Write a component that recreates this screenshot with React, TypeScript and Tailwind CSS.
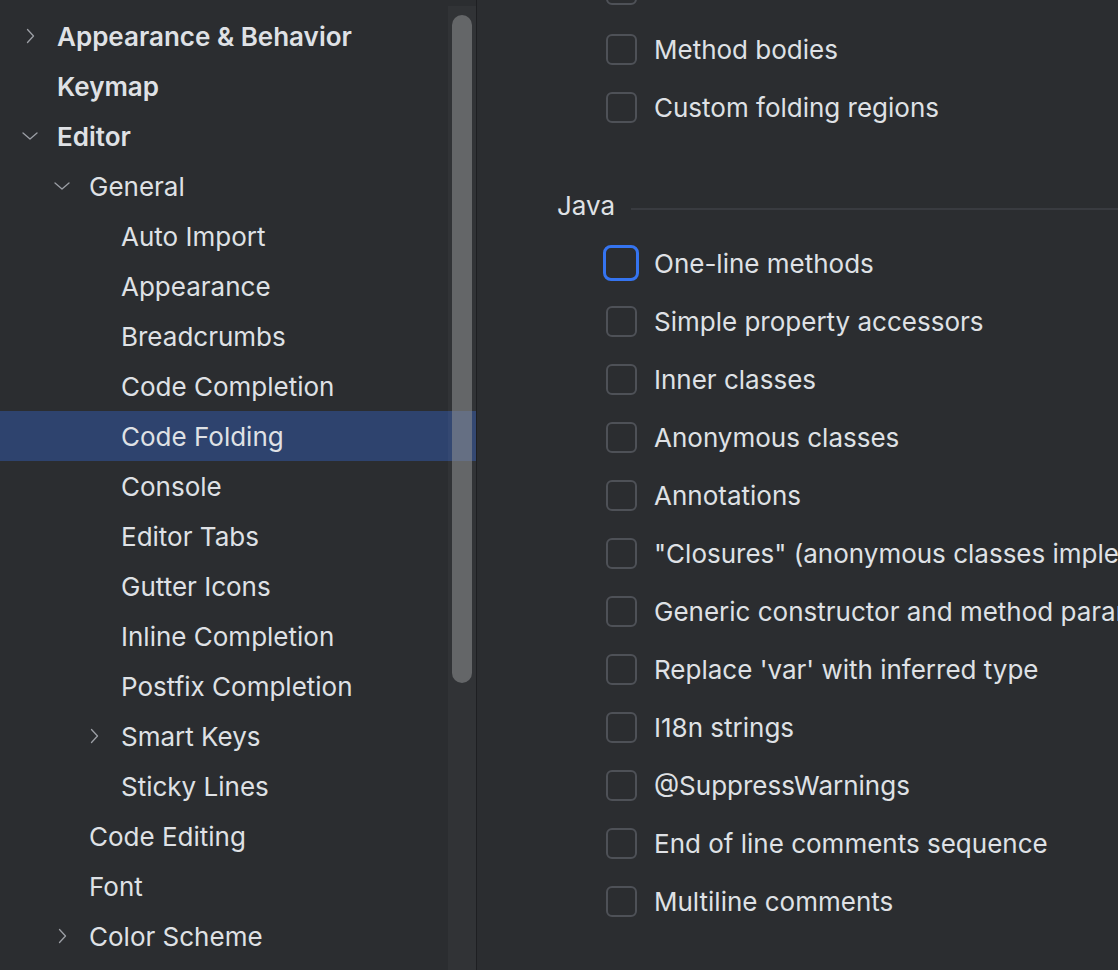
import type { ReactNode } from 'react'

type TreeItem = {
  label: string
  level: number
  arrow?: 'right' | 'down'
  bold?: boolean
  selected?: boolean
}

const tree: TreeItem[] = [
  { label: 'Appearance & Behavior', level: 0, arrow: 'right', bold: true },
  { label: 'Keymap', level: 0, bold: true },
  { label: 'Editor', level: 0, arrow: 'down', bold: true },
  { label: 'General', level: 1, arrow: 'down' },
  { label: 'Auto Import', level: 2 },
  { label: 'Appearance', level: 2 },
  { label: 'Breadcrumbs', level: 2 },
  { label: 'Code Completion', level: 2 },
  { label: 'Code Folding', level: 2, selected: true },
  { label: 'Console', level: 2 },
  { label: 'Editor Tabs', level: 2 },
  { label: 'Gutter Icons', level: 2 },
  { label: 'Inline Completion', level: 2 },
  { label: 'Postfix Completion', level: 2 },
  { label: 'Smart Keys', level: 2, arrow: 'right' },
  { label: 'Sticky Lines', level: 2 },
  { label: 'Code Editing', level: 1 },
  { label: 'Font', level: 1 },
  { label: 'Color Scheme', level: 1, arrow: 'right' },
]

const topOptions = ['Method bodies', 'Custom folding regions']

const javaOptions = [
  'One-line methods',
  'Simple property accessors',
  'Inner classes',
  'Anonymous classes',
  'Annotations',
  '"Closures" (anonymous classes implementing one method)',
  'Generic constructor and method parameters',
  "Replace 'var' with inferred type",
  'I18n strings',
  '@SuppressWarnings',
  'End of line comments sequence',
  'Multiline comments',
]

const indent = ['pl-[16px]', 'pl-[48px]', 'pl-[80px]']

function Chevron({ dir }: { dir: 'right' | 'down' }) {
  return <svg width="16" height="16" viewBox="0 0 16 16" fill="none" stroke="#9c9fa5" strokeWidth="1.3" strokeLinecap="round" strokeLinejoin="round">
    {dir === 'right' ? <path d="M5.5 1.5 L11.5 8 L5.5 14.5" /> : <path d="M1 5 L8 11 L15 5" />}
  </svg>
}

function Checkbox({ focused }: { focused?: boolean }) {
  if (focused) return <div className="w-[36px] h-[36px] -ml-[3px] mr-[15px] rounded-[8px] border-[3px] border-[#3574f0] shrink-0" />
  return <div className="w-[31px] h-[31px] mr-[17px] rounded-[6px] border-2 border-[#4e5157] shrink-0" />
}

function OptionRow({ children, focused }: { children?: ReactNode, focused?: boolean }) {
  return <div className="h-[58px] flex items-center pl-[129px] whitespace-nowrap">
    <Checkbox focused={focused} />
    <span>{children}</span>
  </div>
}

export default function App() {
  return <div className="flex h-[970px] w-[1118px] overflow-hidden bg-[#2b2d30] text-[#dfe1e5] text-[26px] font-['Inter',sans-serif]">
    <aside className="relative w-[477px] shrink-0 border-r border-[#1e1f22]">
      <div className="pt-[11px]">
        {tree.map(item => <div key={item.label} className={`h-[50px] flex items-center ${indent[item.level]} ${item.selected ? 'bg-[#2e436e]' : ''}`}>
          <div className="w-[41px] shrink-0 flex">
            {item.arrow && <div className="ml-[6px]"><Chevron dir={item.arrow} /></div>}
          </div>
          <span className={item.bold ? 'font-semibold' : ''}>{item.label}</span>
        </div>)}
      </div>

      {/* scrollbar */}
      <div className="absolute right-0 top-[6px] bottom-0 w-[28px] bg-[#ffffff]/[0.03]">
        <div className="absolute left-[4px] top-[9px] h-[668px] w-[20px] rounded-full bg-[#8e8f92]/55" />
      </div>
    </aside>

    <main className="flex-1 min-w-0">
      {/* row scrolled almost out of view: only its checkbox edge shows */}
      <div className="-mt-[26px] h-[46px] flex items-start pl-[129px]">
        <Checkbox />
      </div>
      {topOptions.map(o => <OptionRow key={o}>{o}</OptionRow>)}
      <div className="h-[58px] mt-[40px] flex items-center pl-[80px]">
        <span>Java</span>
        <div className="flex-1 h-[2px] bg-[#393b40] ml-[16px] mt-[8px]" />
      </div>
      {javaOptions.map((o, i) => <OptionRow key={o} focused={i === 0}>{o}</OptionRow>)}
    </main>
  </div>
}
